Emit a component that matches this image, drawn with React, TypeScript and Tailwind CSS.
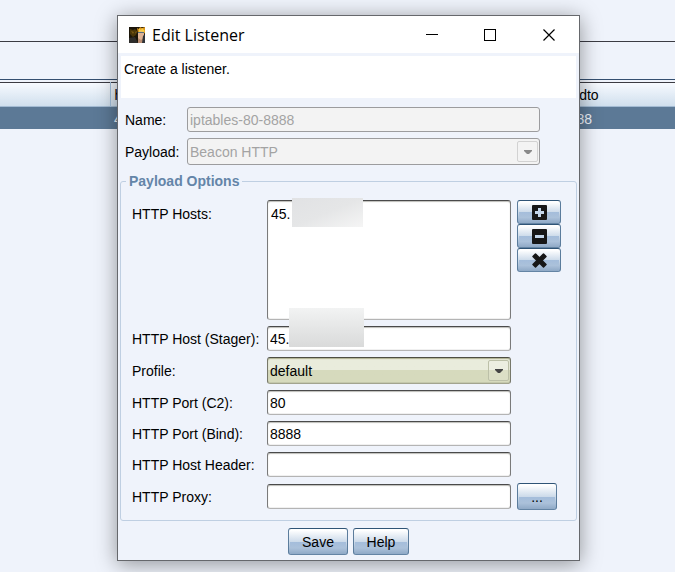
import type { ReactNode } from 'react';

const FIELD =
  'block h-[25px] w-full rounded-[3px] border border-[#7a7a7a] border-t-[#4a4a4a] border-b-[#b4b4b4] bg-white px-[2px] text-sm text-black shadow-[inset_0_1px_1px_#bdbdb8,inset_0_-1px_0_#f0f0f0] outline-none';

const BUTTON =
  'flex items-center justify-center rounded-[3px] border border-[#5b7c9c] border-t-[#2f5476] border-b-[#6484a4] bg-linear-to-b from-white from-5% via-[#cddbea] via-50% to-[#8ba7c6] text-sm text-black';

function Shine() {
  return (
    <span className="absolute inset-x-px bottom-0 top-1/2 bg-linear-to-b from-[#a4bddb] via-[#abc1da] to-[#8fa9c6]" />
  );
}

function GlossButton({ className, label, children }: { className: string; label?: string; children: ReactNode }) {
  return (
    <button type="button" aria-label={label} className={`relative ${BUTTON} ${className}`}>
      <Shine />
      <span className="relative">{children}</span>
    </button>
  );
}

function Arrow({ className }: { className: string }) {
  return (
    <span
      className={`pointer-events-none absolute right-[2px] top-[3px] flex h-[21px] w-[21px] items-center justify-center rounded-[2px] border ${className}`}
    >
      <svg width="8" height="4" viewBox="0 0 8 4" fill="currentColor" aria-hidden="true">
        <path d="M0 0h8v1L5 4H3L0 1z" />
      </svg>
    </span>
  );
}

function Row({ id, label, value, extra }: { id: string; label: string; value: string; extra?: ReactNode }) {
  return (
    <>
      <label htmlFor={id} className="self-center whitespace-nowrap leading-[18px]">
        {label}
      </label>
      <input id={id} defaultValue={value} className={`${FIELD} self-center`} />
      <div>{extra}</div>
    </>
  );
}

function AppIcon() {
  return (
    <svg width="16" height="16" viewBox="0 0 16 16" aria-hidden="true">
      <rect width="16" height="16" fill="#1b1509" />
      <path d="M1 2l3 1 2-1 2 2-1 4-3 2-3-3z" fill="#4a3608" />
      <path d="M2 4l3 1-1 2zM6 5l2-1-1 3z" fill="#7c5c14" />
      <path d="M8 1l2 1 1-2 2 1 3-1v6l-3 2-4-2z" fill="#d9951c" />
      <path d="M10 1l2 2 1-2 3 3-2 2-4 0z" fill="#f7cd45" />
      <path d="M9 6l3-2 3 2v4l-2 4-4-2z" fill="#dfb394" />
      <path d="M9 5h6v1H9z" fill="#566f7c" />
      <path d="M9 11l3 2 3-2v5H9z" fill="#b98d72" />
      <path d="M0 11l6-1 3 6H0z" fill="#2e2d2b" />
      <path d="M14 9l2-2v9h-3z" fill="#2f3338" />
    </svg>
  );
}

export default function App() {
  return (
    <main className="relative min-h-screen overflow-hidden bg-[#eff3fb] font-['Liberation_Sans',Arial,sans-serif] text-sm text-black">
      <div className="h-[42px] border-b border-[#3b3b43]" />
      <div className="mb-[2px] h-[38px] border-b border-[#344f70]" />
      <table className="w-full table-fixed border-collapse border-t border-[#3b3b43] text-left">
        <colgroup>
          <col className="w-[110px]" />
          <col />
          <col className="w-[119px]" />
        </colgroup>
        <thead>
          <tr className="h-[24px] border-b border-[#a3bbd3] bg-linear-to-b from-[#f7faff] to-[#d0dfed]">
            <th className="p-0" />
            <th className="border-l border-[#a3c0dd] p-0 pl-1 font-normal">host</th>
            <th className="border-l border-[#a3c0dd] p-0 pl-1 font-normal">bindto</th>
          </tr>
        </thead>
        <tbody>
          <tr className="h-[22px] bg-[#5c7996] text-[#eff3fb]">
            <td className="p-0" />
            <td className="p-0 pl-1 pt-[2px]">4</td>
            <td className="p-0 pl-[5px] pt-[2px]">8888</td>
          </tr>
        </tbody>
      </table>

      <section
        role="dialog"
        aria-labelledby="title"
        className="absolute left-[117px] right-[95px] top-[15px] border border-[#66686c] bg-[#eff3fb] shadow-[0_3px_20px_rgba(0,0,0,0.4)]"
      >
        <header className="flex h-[37px] items-center bg-white pl-[11px]">
          <AppIcon />
          <h1 id="title" className="ml-[7px] flex-1 font-['Open_Sans','Noto_Sans',sans-serif] text-base leading-5">
            Edit Listener
          </h1>
          <button type="button" aria-label="Minimize" className="flex h-full w-[58px] items-center justify-center">
            <svg width="12" height="12" aria-hidden="true">
              <path d="M0 5.500h12" stroke="#000" />
            </svg>
          </button>
          <button type="button" aria-label="Maximize" className="flex h-full w-[58px] items-center justify-center">
            <svg width="12" height="12" fill="none" aria-hidden="true">
              <rect x="0.500" y="0.500" width="11" height="11" stroke="#000" />
            </svg>
          </button>
          <button type="button" aria-label="Close" className="flex h-full w-[60px] items-center justify-center">
            <svg width="12" height="12" aria-hidden="true">
              <path d="M0.500 0.500l11 11M11.500 0.500l-11 11" stroke="#000" strokeWidth="1.200" />
            </svg>
          </button>
        </header>

        <p className="mx-[3px] mt-[3px] h-[42px] bg-white px-[3px] py-[4px] leading-[18px]">Create a listener.</p>

        <div className="mt-[9px] grid grid-cols-[56px_1fr] items-center gap-[6px] pl-[7px] pr-[39px]">
          <label htmlFor="name">Name:</label>
          <input
            id="name"
            disabled
            defaultValue="iptables-80-8888"
            className="block h-[25px] w-full rounded-[3px] border border-[#9c9c9e] bg-[#f3f3f3] px-[2px] text-[#a3a3a3]"
          />
          <label htmlFor="payload">Payload:</label>
          <div className="relative">
            <select
              id="payload"
              disabled
              className="block h-[27px] w-full appearance-none rounded-[3px] border border-[#9c9c9e] bg-[#f3f3f3] px-[2px] text-[#a3a3a3] opacity-100"
            >
              <option>Beacon HTTP</option>
            </select>
            <Arrow className="border-[#d2d2d2] bg-[#f3f3f3] text-[#8a8a8a]" />
          </div>
        </div>

        <fieldset className="mx-[2px] mt-[8px] rounded-[3px] border border-[#bfcfe2]">
          <legend className="ml-[5px] px-[3px] font-bold leading-[17px] text-[#6485a8]">Payload Options</legend>
          <div className="grid grid-cols-[129px_1fr_44px] gap-[6px] pb-[10px] pl-[11px] pr-[15px] pt-[10px]">
            <label htmlFor="hosts" className="leading-7">
              HTTP Hosts:
            </label>
            <div className="relative">
              <textarea
                id="hosts"
                defaultValue="45."
                className={`${FIELD} h-[120px] resize-none px-[3px] py-[4px] leading-[18px]`}
              />
              <span className="absolute left-[25px] top-[-2px] h-[29px] w-[71px] bg-linear-to-br from-[#e1e2e4] via-[#e5e6e7] to-[#f5f5f5]" />
              <span className="absolute left-[22px] top-[108px] z-10 h-[39px] w-[75px] bg-linear-to-b from-[#f2f3f3] to-[#d9dada]" />
            </div>
            <div>
              <GlossButton label="Add" className="h-[24px] w-full">
                <svg width="15" height="15" viewBox="0 0 15 15" aria-hidden="true">
                  <rect width="15" height="15" rx="1" fill="#171717" />
                  <path d="M6 3h3v3h3v3H9v3H6V9H3V6h3z" fill="#c4d6ea" />
                </svg>
              </GlossButton>
              <GlossButton label="Remove" className="h-[24px] w-full">
                <svg width="15" height="15" viewBox="0 0 15 15" aria-hidden="true">
                  <rect width="15" height="15" rx="1" fill="#171717" />
                  <path d="M3 6h9v3H3z" fill="#c4d6ea" />
                </svg>
              </GlossButton>
              <GlossButton label="Clear" className="h-[24px] w-full">
                <svg width="15" height="15" viewBox="0 0 15 15" aria-hidden="true">
                  <path
                    d="M3.500 1l4 4 4-4L14 3.500l-4 4 4 4-2.500 2.500-4-4-4 4L1 11.500l4-4-4-4z"
                    fill="#171717"
                    stroke="#171717"
                    strokeWidth="1.500"
                    strokeLinejoin="round"
                  />
                </svg>
              </GlossButton>
            </div>

            <Row id="stager" label="HTTP Host (Stager):" value="45." />

            <label htmlFor="profile" className="self-center">
              Profile:
            </label>
            <div className="relative">
              <select
                id="profile"
                className="block h-[27px] w-full appearance-none rounded-[3px] border border-[#77786a] border-t-[#4c4d42] border-b-[#a2a48f] bg-linear-to-b from-[#e9ecdc] from-50% to-[#d6dabd] to-50% px-[2px] text-black shadow-[inset_0_1px_1px_#adb08f,inset_0_-1px_0_#c4c8ac]"
              >
                <option>default</option>
              </select>
              <Arrow className="border-[#bcc0a8] bg-white/15 text-[#454545]" />
            </div>
            <div />

            <Row id="port" label="HTTP Port (C2):" value="80" />
            <Row id="bind" label="HTTP Port (Bind):" value="8888" />
            <Row id="header" label="HTTP Host Header:" value="" />
            <Row
              id="proxy"
              label="HTTP Proxy:"
              value=""
              extra={
                <GlossButton label="Proxy settings" className="h-[27px] w-[40px]">
                  ...
                </GlossButton>
              }
            />
          </div>
        </fieldset>

        <footer className="flex justify-center gap-[5px] pb-[5px] pt-[7px]">
          <GlossButton className="h-[27px] w-[60px]">Save</GlossButton>
          <GlossButton className="h-[27px] w-[56px]">Help</GlossButton>
        </footer>
      </section>
    </main>
  );
}
